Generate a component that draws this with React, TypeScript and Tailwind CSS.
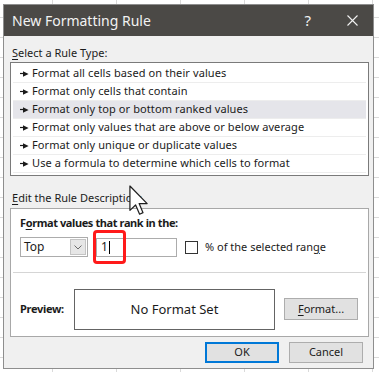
import React from 'react'

const rules = [
  'Format all cells based on their values',
  'Format only cells that contain',
  'Format only top or bottom ranked values',
  'Format only values that are above or below average',
  'Format only unique or duplicate values',
  'Use a formula to determine which cells to format',
]

function Bullet() {
  return (
    <svg width="9" height="6" viewBox="0 0 9 6" className="shrink-0">
      <path d="M0 2.5h4" stroke="#1a1a1a" strokeWidth="1.2" />
      <path d="M3 0.2L8.6 3L3 5.8Z" fill="#1a1a1a" />
    </svg>
  )
}

function Cursor() {
  return (
    <svg
      width="20"
      height="31"
      viewBox="0 0 13 20"
      className="absolute left-[129px] top-[185px]"
    >
      <path
        d="M0.6 0.6V16.4L4.3 12.9L6.9 18.9L9.1 17.9L6.6 12H11.8Z"
        fill="#ffffff"
        stroke="#1f1f1f"
        strokeWidth="0.8"
        strokeLinejoin="round"
      />
    </svg>
  )
}

export default function App() {
  return (
    <div
      className="relative w-[379px] h-[372px] overflow-hidden bg-white pl-[3px] pt-[4px] bg-[linear-gradient(to_bottom,#dadada_1px,transparent_1px),linear-gradient(to_right,#dadada_1px,transparent_1px)] bg-[size:64px_20px] bg-[position:52px_17px]"
      style={{ fontFamily: '"Noto Sans", "Segoe UI", sans-serif' }}
    >
      <div className="flex h-[365px] w-[371px] flex-col border border-[#8e8e8e] bg-[#f0f0f0] text-[11px] text-[#1b1b1b]">
        {/* title bar */}
        <div className="flex h-[31px] items-center bg-[#4b4946] pl-[8px] pr-[15px] text-[#f2f2f2]">
          <span className="text-[14px]">New Formatting Rule</span>
          <span className="ml-auto mr-[36px] text-[15px]">?</span>
          <svg width="11" height="11" viewBox="0 0 11 11">
            <path d="M0.5 0.5L10.5 10.5M10.5 0.5L0.5 10.5" stroke="#f2f2f2" strokeWidth="1.1" />
          </svg>
        </div>

        <div className="flex flex-col pl-[6px] pr-[4px]">
          <div className="mt-[9px] h-[16px] pl-[2px] leading-[16px]">
            <span className="underline underline-offset-2">S</span>elect a Rule Type:
          </div>

          <div className="mt-[1px] h-[114px] border border-[#7a7a7a] bg-white px-[2px] pt-[2px]">
            {rules.map((r, i) => (
              <div
                key={r}
                className={`flex h-[18px] items-center gap-[3px] border-b border-[#ededed] pl-[7px] ${
                  i === 2 ? 'bg-[#e5e5ea]' : ''
                }`}
              >
                <Bullet />
                <span className="tracking-[0.1px]">{r}</span>
              </div>
            ))}
          </div>

          <div className="mt-[14px] h-[16px] pl-[2px] leading-[16px]">
            <span className="underline underline-offset-2">E</span>dit the Rule Description:
          </div>

          <div className="mt-[2px] flex h-[129px] flex-col border border-[#a8a8a8] bg-white px-[1px]">
            <div className="mt-[6px] h-[16px] pl-[8px] font-bold leading-[16px] tracking-[-0.4px]">
              F<span className="underline underline-offset-2">o</span>rmat values that rank in the:
            </div>

            <div className="mt-[6px] flex h-[20px] items-center pl-[8px]">
              <div className="flex h-[20px] w-[68px] items-center border border-[#acacac] bg-white pl-[3px] pr-[1px] text-[12px]">
                <span>Top</span>
                <div className="ml-auto flex h-[16px] w-[16px] items-center justify-center border border-[#c4c4c4] bg-[#e6e6e6]">
                  <svg width="8" height="5" viewBox="0 0 8 5">
                    <path d="M0.5 0.5L4 4L7.5 0.5" stroke="#6a6a6a" strokeWidth="1" fill="none" />
                  </svg>
                </div>
              </div>

              <div className="relative ml-[8px] flex h-[19px] w-[81px] items-center border border-[#acacac] bg-white pl-[4px] text-[12px]">
                <span>1</span>
                <span className="ml-[1px] h-[13px] w-[1px] bg-black" />
                <div className="absolute left-[-4px] top-[-9px] h-[34px] w-[33px] rounded-[4px] border-[3px] border-[#ff1a1a]" />
              </div>

              <div className="ml-[8px] h-[13px] w-[13px] border border-[#333333] bg-white" />
              <span className="ml-[7px]">
                % of the selected ran<span className="underline underline-offset-2">g</span>e
              </span>
            </div>

            <div className="mx-[1px] mt-[15px] h-px bg-[#d5d5d5]" />

            <div className="mt-[16px] flex items-start pl-[8px]">
              <span className="mt-[12px] w-[54px] font-bold tracking-[-0.3px]">Preview:</span>
              <div className="flex h-[41px] w-[201px] items-center justify-center border border-[#646464] bg-white text-[13px]">
                No Format Set
              </div>
              <button className="ml-[9px] mt-[9px] h-[22px] w-[74px] border border-[#adadad] bg-[#e1e1e1]">
                <span className="underline underline-offset-2">F</span>ormat...
              </button>
            </div>
          </div>

          <div className="mt-[5px] flex justify-end gap-[10px] pr-[6px]">
            <button className="h-[21px] w-[74px] border-2 border-[#0078d7] bg-[#e1e1e1]">OK</button>
            <button className="h-[21px] w-[74px] border border-[#adadad] bg-[#e1e1e1]">Cancel</button>
          </div>
        </div>
      </div>
      <Cursor />
    </div>
  )
}
